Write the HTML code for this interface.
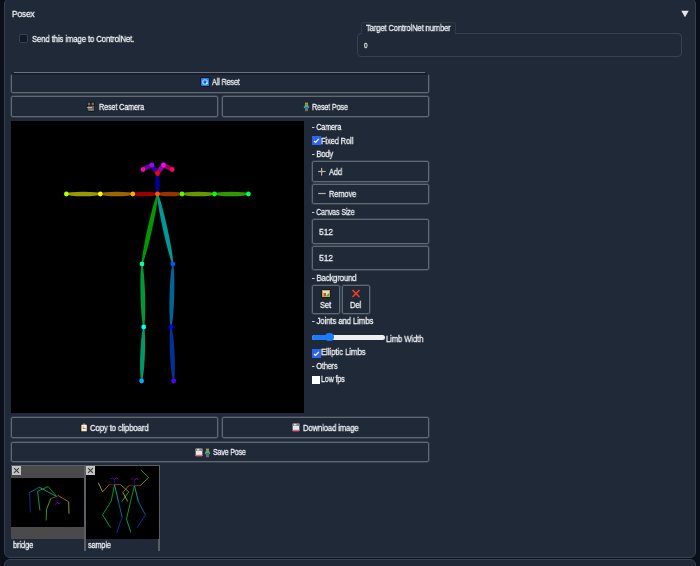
<!DOCTYPE html>
<html><head><meta charset="utf-8">
<style>
*{box-sizing:border-box;margin:0;padding:0}
html,body{width:700px;height:566px;overflow:hidden;background:#0b0f19;font-family:"Liberation Sans",sans-serif;color:#e5e7eb}
.a{position:absolute}
.panel{position:absolute;left:4px;top:-2px;width:692px;height:560px;background:#1f2937;border:1px solid #374151;border-radius:6px}
.panel2{position:absolute;left:4px;top:559px;width:692px;height:20px;background:#1f2937;border:1px solid #374151;border-radius:6px}
.t{position:absolute;font-size:9px;white-space:nowrap;line-height:10px;color:#eef0f3;letter-spacing:-0.15px;transform:scaleX(0.8);transform-origin:0 0;-webkit-text-stroke:0.3px #eef0f3;will-change:transform}
.btn{position:absolute;border:1px solid #616873;background:#1f2937;border-radius:2px;box-shadow:0 0 0 0.7px rgba(97,104,115,0.45)}
.cb{position:absolute;width:9px;height:9px;background:#2563eb;border-radius:1px}
.xb{width:9px;height:9px;background:#c4c4c4}
.xb:before,.xb:after{content:"";position:absolute;left:1px;top:4px;width:7px;height:1px;background:#3a3a3a;transform:rotate(45deg)}
.xb:after{transform:rotate(-45deg)}
</style></head><body>
<div class="panel"></div>
<div class="panel2"></div>

<div class="t" style="left:11.7px;top:9px;font-size:9.5px;transform:scaleX(0.878)">Posex</div>
<svg class="a" style="left:681px;top:10px" width="8" height="8" viewBox="0 0 8 8"><polygon points="0.3,0.8 7.7,0.8 4,7.2" fill="#e2e6ec"/></svg>

<!-- send checkbox -->
<div class="a" style="left:18.6px;top:34px;width:9.4px;height:9.4px;background:#111827;border:1px solid #374151;border-radius:2px"></div>
<div class="t" style="left:32px;top:34px;transform:scaleX(0.865)">Send this image to ControlNet.</div>

<!-- target controlnet number -->
<div class="a" style="left:357px;top:33px;width:325px;height:24px;border:1px solid #374151;border-radius:4px"></div>
<div class="a" style="left:361px;top:22px;width:95px;height:12px;border:1px solid #2f3947;border-bottom:none;border-radius:3px 3px 0 0;background:#1f2937"></div>
<div class="t" style="left:365.8px;top:23px;transform:scaleX(0.846)">Target ControlNet number</div>
<div class="t" style="left:363.7px;top:40.5px;font-size:8px">0</div>

<!-- All reset -->
<div class="a" style="left:14px;top:72px;width:411px;height:1px;background:#6a717b"></div>
<div class="a" style="left:12px;top:73px;width:415px;height:1px;background:#161d29"></div><div class="btn" style="left:11px;top:74px;width:417.5px;height:19px;border-top-color:#182030;box-shadow:-0.7px 0 0 0 rgba(97,104,115,0.45),0.7px 0 0 0 rgba(97,104,115,0.45),0 0.7px 0 0 rgba(97,104,115,0.45)"></div>
<svg class="a" style="left:200px;top:77px" width="10" height="10" viewBox="0 0 10 10"><rect x="0.3" y="0.3" width="9.4" height="9.4" rx="1" fill="#0b1220"/><rect x="1" y="1" width="8" height="8" rx="0.8" fill="#1e7ef0"/><circle cx="5" cy="5" r="2.3" fill="none" stroke="#a9d2ff" stroke-width="1.1"/><circle cx="5" cy="5" r="1.2" fill="#1468d8"/><circle cx="6.9" cy="6.3" r="0.7" fill="#fff"/></svg>
<div class="t" style="left:212px;top:77px;transform:scaleX(0.8)">All Reset</div>

<!-- Reset camera / pose -->
<div class="btn" style="left:11px;top:96px;width:207px;height:21px"></div>
<svg class="a" style="left:86px;top:101px" width="10" height="11" viewBox="0 0 10 11"><circle cx="3" cy="3" r="2.2" fill="#111"/><circle cx="6.8" cy="3" r="2.2" fill="#111"/><rect x="1" y="4" width="8" height="6.5" rx="1" fill="#111"/><circle cx="3" cy="3" r="1.4" fill="#6d6a66"/><circle cx="6.8" cy="3" r="1.4" fill="#6d6a66"/><rect x="1.7" y="4.8" width="6.6" height="5" fill="#5e5b58"/><rect x="1.2" y="6.2" width="6" height="1" fill="#c9c9c9"/><circle cx="6.8" cy="6.7" r="0.7" fill="#b33a2a"/><rect x="2.5" y="8.2" width="5" height="1.3" fill="#8a867f"/></svg>
<div class="t" style="left:98.5px;top:101.5px;transform:scaleX(0.802)">Reset Camera</div>
<div class="btn" style="left:222px;top:96px;width:206.5px;height:21px"></div>
<svg class="a" style="left:303px;top:102px" width="7" height="10" viewBox="0 0 7 10"><rect x="2" y="0.6" width="3" height="2.2" fill="#d4901f"/><rect x="1.7" y="2.7" width="3.6" height="2.6" fill="#1fc0a0"/><rect x="0.9" y="4.2" width="1" height="2" fill="#c8841c"/><rect x="5.1" y="4.2" width="1" height="2" fill="#c8841c"/><rect x="2" y="5.2" width="3" height="2.8" fill="#3a78c0"/><rect x="2" y="8" width="3" height="1.2" fill="#9a6a10"/></svg>
<div class="t" style="left:311.5px;top:101.5px;transform:scaleX(0.793)">Reset Pose</div>

<!-- canvas -->
<svg class="a" style="left:11px;top:121px" width="293" height="292" viewBox="11 121 293 292">
<rect x="11" y="121" width="293" height="292" fill="#000"/>
<ellipse cx="145.2" cy="194.0" rx="12.3" ry="2.3" fill="rgb(153,0,0)" transform="rotate(180.00 145.2 194.0)"/>
<ellipse cx="169.8" cy="194.0" rx="12.2" ry="2.3" fill="rgb(153,51,0)" transform="rotate(0.00 169.8 194.0)"/>
<ellipse cx="116.6" cy="194.0" rx="16.3" ry="2.3" fill="rgb(153,102,0)" transform="rotate(180.00 116.6 194.0)"/>
<ellipse cx="83.3" cy="194.0" rx="16.9" ry="2.3" fill="rgb(153,153,0)" transform="rotate(180.00 83.3 194.0)"/>
<ellipse cx="198.2" cy="194.0" rx="16.2" ry="2.3" fill="rgb(102,153,0)" transform="rotate(0.00 198.2 194.0)"/>
<ellipse cx="231.4" cy="194.0" rx="17.0" ry="2.3" fill="rgb(51,153,0)" transform="rotate(0.00 231.4 194.0)"/>
<ellipse cx="149.8" cy="229.0" rx="35.8" ry="2.3" fill="rgb(0,153,0)" transform="rotate(102.49 149.8 229.0)"/>
<ellipse cx="142.8" cy="295.5" rx="31.5" ry="2.3" fill="rgb(0,153,51)" transform="rotate(88.45 142.8 295.5)"/>
<ellipse cx="142.6" cy="354.0" rx="27.0" ry="2.3" fill="rgb(0,153,102)" transform="rotate(92.23 142.6 354.0)"/>
<ellipse cx="165.2" cy="229.0" rx="35.8" ry="2.3" fill="rgb(0,153,153)" transform="rotate(77.67 165.2 229.0)"/>
<ellipse cx="171.9" cy="295.5" rx="31.5" ry="2.3" fill="rgb(0,102,153)" transform="rotate(91.64 171.9 295.5)"/>
<ellipse cx="172.3" cy="354.0" rx="27.0" ry="2.3" fill="rgb(0,51,153)" transform="rotate(87.24 172.3 354.0)"/>
<ellipse cx="157.5" cy="183.8" rx="10.2" ry="2.3" fill="rgb(0,0,153)" transform="rotate(-90.00 157.5 183.8)"/>
<ellipse cx="154.7" cy="169.2" rx="5.1" ry="2.3" fill="rgb(51,0,153)" transform="rotate(-123.85 154.7 169.2)"/>
<ellipse cx="147.4" cy="167.2" rx="4.9" ry="2.3" fill="rgb(102,0,153)" transform="rotate(152.92 147.4 167.2)"/>
<ellipse cx="160.5" cy="169.2" rx="5.2" ry="2.3" fill="rgb(153,0,153)" transform="rotate(-54.78 160.5 169.2)"/>
<ellipse cx="167.8" cy="167.2" rx="4.9" ry="2.3" fill="rgb(153,0,102)" transform="rotate(27.35 167.8 167.2)"/>
<circle cx="157.5" cy="173.5" r="2.4" fill="rgb(255,0,0)"/>
<circle cx="157.5" cy="194.0" r="2.4" fill="rgb(255,85,0)"/>
<circle cx="132.8" cy="194.0" r="2.4" fill="rgb(255,170,0)"/>
<circle cx="100.3" cy="194.0" r="2.4" fill="rgb(255,255,0)"/>
<circle cx="66.4" cy="194.0" r="2.4" fill="rgb(170,255,0)"/>
<circle cx="182.0" cy="194.0" r="2.4" fill="rgb(85,255,0)"/>
<circle cx="214.5" cy="194.0" r="2.4" fill="rgb(0,255,0)"/>
<circle cx="248.4" cy="194.0" r="2.4" fill="rgb(0,255,85)"/>
<circle cx="142.0" cy="264.0" r="2.4" fill="rgb(0,255,170)"/>
<circle cx="143.7" cy="327.0" r="2.4" fill="rgb(0,255,255)"/>
<circle cx="141.6" cy="381.0" r="2.4" fill="rgb(0,170,255)"/>
<circle cx="172.8" cy="264.0" r="2.4" fill="rgb(0,85,255)"/>
<circle cx="171.0" cy="327.0" r="2.4" fill="rgb(0,0,255)"/>
<circle cx="173.6" cy="381.0" r="2.4" fill="rgb(85,0,255)"/>
<circle cx="151.8" cy="165.0" r="2.4" fill="rgb(170,0,255)"/>
<circle cx="163.5" cy="165.0" r="2.4" fill="rgb(255,0,255)"/>
<circle cx="143.0" cy="169.5" r="2.4" fill="rgb(255,0,170)"/>
<circle cx="172.2" cy="169.5" r="2.4" fill="rgb(255,0,85)"/>

</svg>

<!-- right column -->
<div class="t" style="left:312px;top:122px;transform:scaleX(0.802)">- Camera</div>
<svg class="a" style="left:312px;top:136px" width="9" height="9" viewBox="0 0 9 9"><rect width="9" height="9" fill="#2d64ef"/><path d="M2 5.1 L3.6 6.4 L6.8 2.9" fill="none" stroke="#fff" stroke-width="1.3"/></svg>
<div class="t" style="left:321px;top:135.6px;transform:scaleX(0.835)">Fixed Roll</div>
<div class="t" style="left:312px;top:148.5px;transform:scaleX(0.84)">- Body</div>
<div class="btn" style="left:312px;top:161px;width:117px;height:21px"></div>
<svg class="a" style="left:316px;top:166px" width="11" height="11" viewBox="0 0 11 11"><path d="M5.6 1.4V10.1M1.6 5.6H10.1" stroke="#000" stroke-width="3" opacity="0.7"/><path d="M5.6 1.8V9.8M1.9 5.6H9.8" stroke="#b3b1ae" stroke-width="1.5"/></svg>
<div class="t" style="left:329px;top:166.5px;transform:scaleX(0.829)">Add</div>
<div class="btn" style="left:312px;top:184px;width:117px;height:20px"></div>
<svg class="a" style="left:316px;top:189px" width="11" height="8" viewBox="0 0 11 8"><path d="M1.6 4.5H10.1" stroke="#000" stroke-width="3" opacity="0.7"/><path d="M1.9 4.5H9.8" stroke="#b3b1ae" stroke-width="1.5"/></svg>
<div class="t" style="left:329px;top:189px;transform:scaleX(0.831)">Remove</div>
<div class="t" style="left:312px;top:207.1px;transform:scaleX(0.786)">- Canvas Size</div>
<div class="btn" style="left:312px;top:219px;width:117px;height:25px"></div>
<div class="t" style="left:319px;top:226.6px;font-size:9.6px;transform:scaleX(0.9)">512</div>
<div class="btn" style="left:312px;top:246px;width:117px;height:24px"></div>
<div class="t" style="left:319px;top:252.6px;font-size:9.6px;transform:scaleX(0.9)">512</div>
<div class="t" style="left:312px;top:273px;transform:scaleX(0.858)">- Background</div>
<div class="btn" style="left:312px;top:285px;width:28px;height:29px"></div>
<svg class="a" style="left:321px;top:289px" width="10" height="9" viewBox="0 0 10 9"><rect x="0.5" y="0.5" width="9" height="8" fill="#111"/><rect x="1" y="1" width="8" height="7" fill="#d9a520"/><rect x="2" y="2" width="6" height="5" fill="#bfe3f5"/><rect x="2.5" y="4" width="2.5" height="3" fill="#d24a3a"/><path d="M5 7 L8 4 L8 7Z" fill="#3cb43c"/></svg>
<div class="t" style="left:320px;top:300px;transform:scaleX(0.838)">Set</div>
<div class="btn" style="left:342px;top:285px;width:28px;height:29px"></div>
<svg class="a" style="left:351px;top:289px" width="10" height="9" viewBox="0 0 10 9"><path d="M1.5 1 L8.5 8 M8.5 1 L1.5 8" stroke="#f0401a" stroke-width="1.6"/></svg>
<div class="t" style="left:350px;top:300px;transform:scaleX(0.857)">Del</div>
<div class="t" style="left:312px;top:315.7px;transform:scaleX(0.87)">- Joints and Limbs</div>
<div class="a" style="left:312px;top:335px;width:73px;height:4.5px;border-radius:3px;background:#efefef"></div><div class="a" style="left:312px;top:335px;width:18px;height:4.5px;border-radius:3px 0 0 3px;background:#1a7cfa"></div><div class="a" style="left:325.3px;top:333px;width:8.4px;height:8.4px;border-radius:50%;background:#1a7cfa"></div>
<div class="t" style="left:386px;top:333.8px;transform:scaleX(0.855)">Limb Width</div>
<svg class="a" style="left:312px;top:348.7px" width="9" height="9" viewBox="0 0 9 9"><rect width="9" height="9" fill="#2d64ef"/><path d="M2 5.1 L3.6 6.4 L6.8 2.9" fill="none" stroke="#fff" stroke-width="1.3"/></svg>
<div class="t" style="left:321px;top:347.4px;transform:scaleX(0.884)">Elliptic Limbs</div>
<div class="t" style="left:312px;top:360.6px;transform:scaleX(0.816)">- Others</div>
<div class="a" style="left:312px;top:375.8px;width:8.3px;height:8.4px;background:#fff"></div>
<div class="t" style="left:321px;top:374.4px;transform:scaleX(0.789)">Low fps</div>

<!-- bottom buttons -->
<div class="btn" style="left:11px;top:417px;width:207px;height:21px"></div>
<svg class="a" style="left:80px;top:422.8px" width="8" height="9" viewBox="0 0 8 10" preserveAspectRatio="none"><rect x="0.6" y="1" width="7" height="9" rx="0.6" fill="#1a120a"/><rect x="1.1" y="1.6" width="6" height="7.8" rx="0.5" fill="#d09a5a"/><rect x="1.8" y="2.2" width="4.6" height="6.6" fill="#f2f2f2"/><rect x="3.2" y="0.6" width="1.8" height="1.6" fill="#999"/><rect x="2.6" y="4" width="1.6" height="0.8" fill="#777"/><rect x="2.6" y="5.8" width="3" height="0.8" fill="#666"/></svg>
<div class="t" style="left:90.4px;top:422.7px;transform:scaleX(0.866)">Copy to clipboard</div>
<div class="btn" style="left:222px;top:417px;width:206.5px;height:21px"></div>
<svg class="a" style="left:292px;top:423px" width="8" height="9" viewBox="0 0 8 9"><rect x="0" y="0" width="8" height="9" rx="0.6" fill="#111"/><rect x="0.6" y="0.6" width="6.8" height="7.6" fill="#e8e8e8"/><rect x="0.6" y="0.6" width="6.8" height="2.4" fill="#8a8a8a"/><rect x="2" y="0.9" width="2.4" height="1.6" fill="#d8d8d8"/><rect x="0.6" y="6.8" width="6.8" height="1.4" fill="#e0608a"/></svg>
<div class="t" style="left:303px;top:422.7px;transform:scaleX(0.854)">Download image</div>
<div class="btn" style="left:11px;top:442px;width:417.5px;height:20px"></div>
<svg class="a" style="left:194.5px;top:448px" width="8" height="9" viewBox="0 0 8 9"><rect x="0" y="0" width="8" height="9" rx="0.6" fill="#111"/><rect x="0.6" y="0.6" width="6.8" height="7.6" fill="#e8e8e8"/><rect x="0.6" y="0.6" width="6.8" height="2.4" fill="#8a8a8a"/><rect x="2" y="0.9" width="2.4" height="1.6" fill="#d8d8d8"/><rect x="0.6" y="6.8" width="6.8" height="1.4" fill="#e0608a"/></svg><svg class="a" style="left:204px;top:447.5px" width="7" height="10" viewBox="0 0 7 10"><rect x="2" y="0.6" width="3" height="2.2" fill="#d4901f"/><rect x="1.7" y="2.7" width="3.6" height="2.6" fill="#1fc0a0"/><rect x="0.9" y="4.2" width="1" height="2" fill="#c8841c"/><rect x="5.1" y="4.2" width="1" height="2" fill="#c8841c"/><rect x="2" y="5.2" width="3" height="2.8" fill="#3a78c0"/><rect x="2" y="8" width="3" height="1.2" fill="#9a6a10"/></svg>
<div class="t" style="left:212.8px;top:446.8px;transform:scaleX(0.775)">Save Pose</div>

<!-- thumbnails -->
<div class="a" style="left:11px;top:465px;width:75px;height:86px;border-top:1px solid #5a5f66;border-right:2px solid #5a5f66"></div>
<div class="a" style="left:86px;top:465px;width:74px;height:86px;border-top:1px solid #5a5f66;border-right:2px solid #5a5f66"></div>
<div class="a" style="left:11px;top:466px;width:73px;height:73px;background:#4a4a4a"></div>
<svg class="a" style="left:11px;top:478px" width="73" height="49" viewBox="0 90 550 370"><rect x="0" y="90" width="550" height="370" fill="#000"/><line x1="345" y1="230" x2="355" y2="222" stroke="rgb(191,0,0)" stroke-width="6"/><line x1="345" y1="230" x2="300" y2="245" stroke="rgb(191,63,0)" stroke-width="6"/><line x1="355" y1="222" x2="435" y2="270" stroke="rgb(191,127,0)" stroke-width="6"/><line x1="435" y1="270" x2="437" y2="360" stroke="rgb(191,191,0)" stroke-width="6"/><line x1="300" y1="245" x2="268" y2="325" stroke="rgb(127,191,0)" stroke-width="6"/><line x1="268" y1="325" x2="265" y2="410" stroke="rgb(63,191,0)" stroke-width="6"/><line x1="345" y1="230" x2="280" y2="155" stroke="rgb(0,191,0)" stroke-width="6"/><line x1="280" y1="155" x2="200" y2="190" stroke="rgb(0,191,63)" stroke-width="6"/><line x1="200" y1="190" x2="218" y2="335" stroke="rgb(0,191,127)" stroke-width="6"/><line x1="345" y1="230" x2="213" y2="160" stroke="rgb(0,191,191)" stroke-width="6"/><line x1="213" y1="160" x2="140" y2="200" stroke="rgb(0,127,191)" stroke-width="6"/><line x1="140" y1="200" x2="145" y2="350" stroke="rgb(0,63,191)" stroke-width="6"/><line x1="345" y1="230" x2="350" y2="270" stroke="rgb(0,0,191)" stroke-width="6"/><line x1="350" y1="270" x2="340" y2="285" stroke="rgb(63,0,191)" stroke-width="6"/><line x1="340" y1="285" x2="330" y2="292" stroke="rgb(127,0,191)" stroke-width="6"/><line x1="350" y1="270" x2="362" y2="285" stroke="rgb(191,0,191)" stroke-width="6"/><line x1="362" y1="285" x2="372" y2="275" stroke="rgb(191,0,127)" stroke-width="6"/></svg>
<svg class="a" style="left:86px;top:466px" width="73" height="73" viewBox="0 0 550 550"><rect width="550" height="550" fill="#000"/><line x1="215" y1="140" x2="175" y2="140" stroke="rgb(191,0,0)" stroke-width="6"/><line x1="215" y1="140" x2="260" y2="140" stroke="rgb(191,63,0)" stroke-width="6"/><line x1="175" y1="140" x2="125" y2="195" stroke="rgb(191,127,0)" stroke-width="6"/><line x1="125" y1="195" x2="92" y2="125" stroke="rgb(191,191,0)" stroke-width="6"/><line x1="260" y1="140" x2="322" y2="195" stroke="rgb(127,191,0)" stroke-width="6"/><line x1="322" y1="195" x2="270" y2="268" stroke="rgb(63,191,0)" stroke-width="6"/><line x1="215" y1="140" x2="190" y2="265" stroke="rgb(0,191,0)" stroke-width="6"/><line x1="190" y1="265" x2="125" y2="368" stroke="rgb(0,191,63)" stroke-width="6"/><line x1="125" y1="368" x2="185" y2="465" stroke="rgb(0,191,127)" stroke-width="6"/><line x1="215" y1="140" x2="245" y2="270" stroke="rgb(0,191,191)" stroke-width="6"/><line x1="245" y1="270" x2="272" y2="385" stroke="rgb(0,127,191)" stroke-width="6"/><line x1="272" y1="385" x2="232" y2="502" stroke="rgb(0,63,191)" stroke-width="6"/><line x1="215" y1="140" x2="215" y2="100" stroke="rgb(0,0,191)" stroke-width="6"/><line x1="215" y1="100" x2="200" y2="90" stroke="rgb(63,0,191)" stroke-width="6"/><line x1="200" y1="90" x2="185" y2="97" stroke="rgb(127,0,191)" stroke-width="6"/><line x1="215" y1="100" x2="230" y2="90" stroke="rgb(191,0,191)" stroke-width="6"/><line x1="230" y1="90" x2="245" y2="97" stroke="rgb(191,0,127)" stroke-width="6"/><line x1="365" y1="148" x2="322" y2="148" stroke="rgb(191,0,0)" stroke-width="6"/><line x1="365" y1="148" x2="408" y2="148" stroke="rgb(191,63,0)" stroke-width="6"/><line x1="322" y1="148" x2="278" y2="200" stroke="rgb(191,127,0)" stroke-width="6"/><line x1="278" y1="200" x2="315" y2="268" stroke="rgb(191,191,0)" stroke-width="6"/><line x1="408" y1="148" x2="472" y2="88" stroke="rgb(127,191,0)" stroke-width="6"/><line x1="472" y1="88" x2="415" y2="30" stroke="rgb(63,191,0)" stroke-width="6"/><line x1="365" y1="148" x2="335" y2="270" stroke="rgb(0,191,0)" stroke-width="6"/><line x1="335" y1="270" x2="305" y2="400" stroke="rgb(0,191,63)" stroke-width="6"/><line x1="305" y1="400" x2="338" y2="500" stroke="rgb(0,191,127)" stroke-width="6"/><line x1="365" y1="148" x2="395" y2="270" stroke="rgb(0,191,191)" stroke-width="6"/><line x1="395" y1="270" x2="448" y2="368" stroke="rgb(0,127,191)" stroke-width="6"/><line x1="448" y1="368" x2="385" y2="465" stroke="rgb(0,63,191)" stroke-width="6"/><line x1="365" y1="148" x2="365" y2="105" stroke="rgb(0,0,191)" stroke-width="6"/><line x1="365" y1="105" x2="352" y2="94" stroke="rgb(63,0,191)" stroke-width="6"/><line x1="352" y1="94" x2="338" y2="100" stroke="rgb(127,0,191)" stroke-width="6"/><line x1="365" y1="105" x2="380" y2="94" stroke="rgb(191,0,191)" stroke-width="6"/><line x1="380" y1="94" x2="395" y2="102" stroke="rgb(191,0,127)" stroke-width="6"/></svg>
<div class="a xb" style="left:11.5px;top:466px"></div>
<div class="a xb" style="left:86.3px;top:466px"></div>
<div class="t" style="left:13px;top:540px;transform:scaleX(0.837)">bridge</div>
<div class="t" style="left:88px;top:540px;transform:scaleX(0.808)">sample</div>
</body></html>
